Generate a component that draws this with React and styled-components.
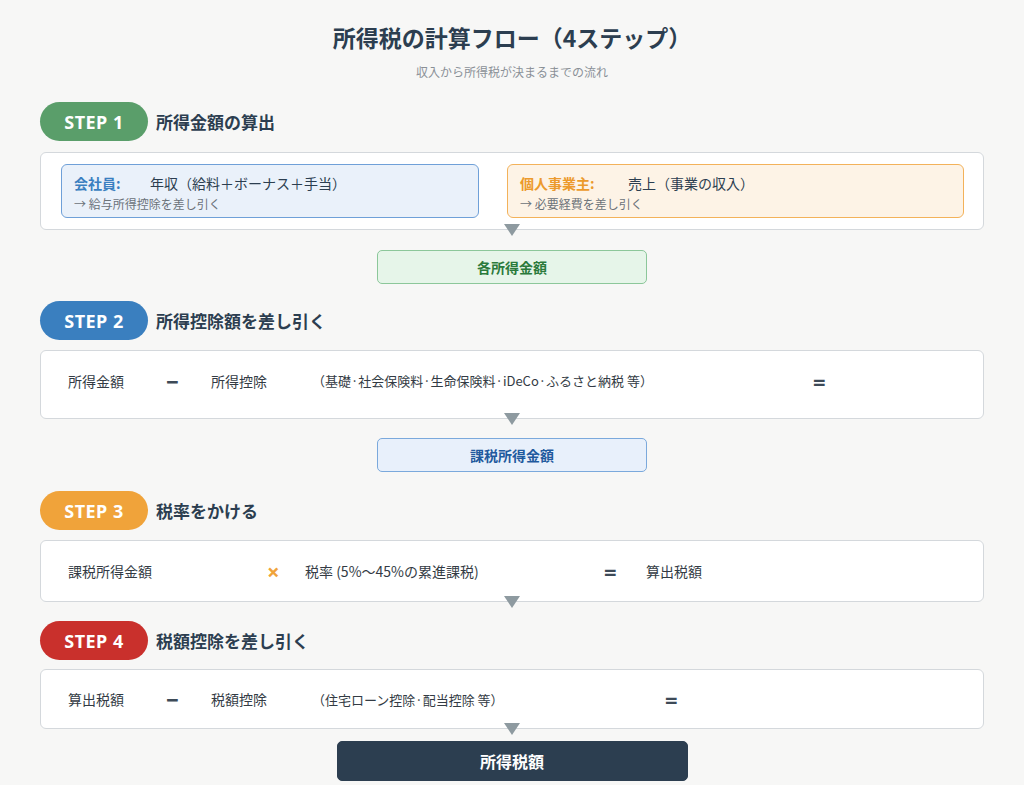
import React from "react";
import styled, { createGlobalStyle } from "styled-components";

const Global = createGlobalStyle`
  body { margin:0; background:#f7f7f6; font-family: "Noto Sans CJK JP", "Noto Sans", sans-serif; color:#2c3e50; }
`;
const Page = styled.div`width:1024px;height:785px;overflow:hidden;padding:0 40px;box-sizing:border-box;`;
const Title = styled.h1`margin:0;padding-top:20px;text-align:center;font-size:23px;font-weight:700;line-height:34px;color:#2c3e50;`;
const Sub = styled.div`text-align:center;font-size:12px;color:#8a9096;margin-top:9px;line-height:18px;`;
const StepHead = styled.div`display:flex;align-items:center;gap:8px;margin-top:${p=>p.$mt}px;`;
const Pill = styled.div`width:108px;height:39px;border-radius:20px;background:${p=>p.$c};color:#fff;font-size:18px;font-weight:700;display:flex;align-items:center;justify-content:center;letter-spacing:0.5px;font-family:"Noto Sans","Noto Sans CJK JP",sans-serif;`;
const StepTitle = styled.div`font-size:17px;font-weight:700;color:#2c3e50;`;
const Card = styled.div`margin-top:${p=>p.$mt ?? 11}px;height:${p=>p.$h}px;box-sizing:border-box;background:#fff;border:1.5px solid #d4d8dc;border-radius:6px;display:flex;align-items:${p=>p.$top?'flex-start':'center'};padding:${p=>p.$top?'20px 0 0 27px':'0 0 0 27px'};`;
const Split = styled.div`display:flex;gap:28px;padding:0 19px 0 20px;width:100%;`;
const Src = styled.div`width:${p=>p.$w}px;height:54px;box-sizing:border-box;border:1.5px solid ${p=>p.$b};background:${p=>p.$bg};border-radius:6px;padding:8px 12px;`;
const SrcLine = styled.div`display:flex;font-size:14px;line-height:20px;`;
const SrcLabel = styled.span`width:${p=>p.$w}px;font-weight:700;color:${p=>p.$c};`;
const SrcNote = styled.div`font-size:12px;color:#6b7279;line-height:18px;margin-top:2px;`;
const Cell = styled.div`width:${p=>p.$w ? p.$w+'px' : 'auto'};flex:none;font-size:${p=>p.$small?13:14}px;color:#333b44;`;
const Op = styled.div`width:${p=>p.$w}px;flex:none;font-size:22px;font-weight:700;line-height:20px;color:${p=>p.$c||'#3d4a57'};font-family:"Noto Sans",sans-serif;`;
const ArrowWrap = styled.div`display:flex;justify-content:center;margin-top:-6px;height:12px;`;
const Arrow = styled.div`width:0;height:0;border-left:8px solid transparent;border-right:8px solid transparent;border-top:12px solid #8e9aa0;`;
const ResultRow = styled.div`display:flex;justify-content:center;margin-top:${p=>p.$mt}px;`;
const Result = styled.div`width:${p=>p.$w}px;height:${p=>p.$h}px;box-sizing:border-box;border-radius:5px;border:1.5px solid ${p=>p.$b};background:${p=>p.$bg};color:${p=>p.$c};font-weight:700;font-size:${p=>p.$fs}px;display:flex;align-items:center;justify-content:center;`;

export default function App(){
  return (<Page><Global/>
    <Title>所得税の計算フロー（4ステップ）</Title>
    <Sub>収入から所得税が決まるまでの流れ</Sub>

    <StepHead $mt={21}><Pill $c="#5a9e6a">STEP 1</Pill><StepTitle>所得金額の算出</StepTitle></StepHead>
    <Card $h={78} $mt={11} style={{padding:0}}>
      <Split>
        <Src $w={418} $b="#6fa0d8" $bg="#eaf1fa"><SrcLine><SrcLabel $w={76} $c="#3a7fc0">会社員:</SrcLabel>年収（給料＋ボーナス＋手当）</SrcLine><SrcNote>→ 給与所得控除を差し引く</SrcNote></Src>
        <Src $w={457} $b="#f3b25a" $bg="#fdf3e6"><SrcLine><SrcLabel $w={108} $c="#ec9a2c">個人事業主:</SrcLabel>売上（事業の収入）</SrcLine><SrcNote>→ 必要経費を差し引く</SrcNote></Src>
      </Split>
    </Card>
    <ArrowWrap><Arrow/></ArrowWrap>
    <ResultRow $mt={14}><Result $w={270} $h={34} $b="#8cc79a" $bg="#e6f5e9" $c="#2b7a3b" $fs={14}>各所得金額</Result></ResultRow>

    <StepHead $mt={17}><Pill $c="#3a7fbf">STEP 2</Pill><StepTitle>所得控除額を差し引く</StepTitle></StepHead>
    <Card $h={69} $mt={10} $top>
      <Cell $w={98}>所得金額</Cell><Op $w={45}>−</Op><Cell $w={101}>所得控除</Cell><Cell $w={501} $small>（基礎·社会保険料·生命保険料·iDeCo·ふるさと納税 等）</Cell><Op $w={20}>=</Op>
    </Card>
    <ArrowWrap><Arrow/></ArrowWrap>
    <ResultRow $mt={13}><Result $w={270} $h={34} $b="#7ba9dc" $bg="#e8f0fb" $c="#1f5a9e" $fs={14}>課税所得金額</Result></ResultRow>

    <StepHead $mt={19}><Pill $c="#f0a33a">STEP 3</Pill><StepTitle>税率をかける</StepTitle></StepHead>
    <Card $h={62} $mt={10}>
      <Cell $w={199}>課税所得金額</Cell><Op $w={38} $c="#f0a33a">×</Op><Cell $w={299}>税率 (5%〜45%の累進課税)</Cell><Op $w={42}>=</Op><Cell>算出税額</Cell>
    </Card>
    <ArrowWrap><Arrow/></ArrowWrap>

    <StepHead $mt={13}><Pill $c="#c9302c">STEP 4</Pill><StepTitle>税額控除を差し引く</StepTitle></StepHead>
    <Card $h={60} $mt={9}>
      <Cell $w={98}>算出税額</Cell><Op $w={45}>−</Op><Cell $w={101}>税額控除</Cell><Cell $w={353} $small>（住宅ローン控除·配当控除 等）</Cell><Op $w={20}>=</Op>
    </Card>
    <ArrowWrap><Arrow/></ArrowWrap>
    <ResultRow $mt={6}><Result $w={351} $h={40} $b="#2c3e50" $bg="#2c3e50" $c="#fff" $fs={16}>所得税額</Result></ResultRow>
  </Page>);
}
